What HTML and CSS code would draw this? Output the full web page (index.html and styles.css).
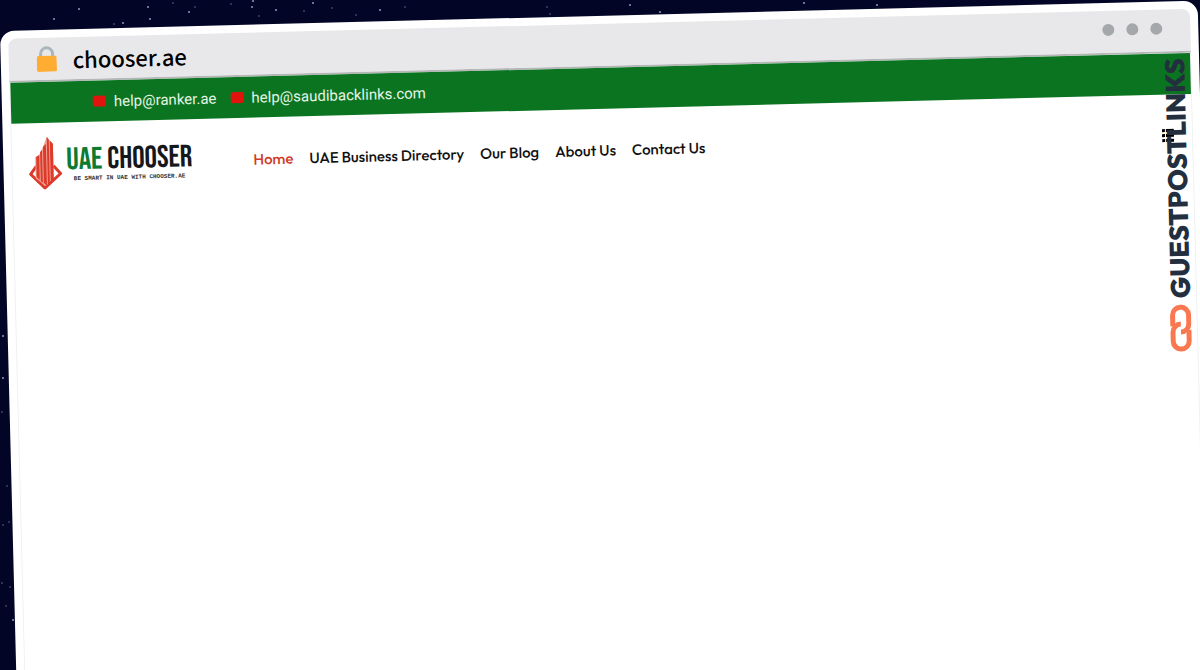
FILE: index.html
```
<!DOCTYPE html>
<html lang="en">
<head>
    <meta charset="UTF-8">
    <title>UAE Chooser</title>
    <link rel="stylesheet" href="styles.css">
</head>
<body>
<svg class="stars" aria-hidden="true">
    <g fill="#8f99be">
        <circle cx="54" cy="19" r="1"/><circle cx="79" cy="9" r="1"/><circle cx="123" cy="23" r="1"/>
        <circle cx="148" cy="7" r="1"/><circle cx="150" cy="19" r="1"/><circle cx="189" cy="12" r="1"/>
        <circle cx="252" cy="7" r="1"/><circle cx="253" cy="1" r="1"/><circle cx="276" cy="10" r="1"/>
        <circle cx="313" cy="3" r="1"/><circle cx="380" cy="10" r="1"/><circle cx="630" cy="5" r="1"/>
        <circle cx="660" cy="12" r="1"/><circle cx="804" cy="3" r="1"/><circle cx="877" cy="5" r="1"/>
        <circle cx="3" cy="336" r="1"/><circle cx="3" cy="378" r="1"/><circle cx="13" cy="620" r="1"/>
    </g>
    <g fill="#3b4368">
        <circle cx="114" cy="24" r="1"/><circle cx="173" cy="3" r="1"/><circle cx="195" cy="7" r="1"/>
        <circle cx="231" cy="4" r="1"/><circle cx="259" cy="16" r="1"/><circle cx="304" cy="11" r="1"/>
        <circle cx="332" cy="8" r="1"/><circle cx="356" cy="15" r="1"/><circle cx="405" cy="7" r="1"/>
        <circle cx="547" cy="7" r="1"/><circle cx="550" cy="14" r="1"/><circle cx="2" cy="412" r="1"/>
        <circle cx="7" cy="486" r="1"/><circle cx="3" cy="525" r="1"/><circle cx="9" cy="522" r="1"/>
        <circle cx="2" cy="583" r="1"/><circle cx="10" cy="587" r="1"/><circle cx="6" cy="606" r="1"/>
    </g>
</svg>
<div class="browser">
    <div class="bar">
        <svg class="lock" viewBox="0 0 20 26" aria-hidden="true">
            <path d="M4 12V8a6 6 0 0 1 12 0v4" fill="none" stroke="#a9b6bd" stroke-width="3"/>
            <rect y="10" width="20" height="16" rx="2" fill="#ffac33"/>
        </svg>
        <span class="address">chooser.ae</span>
        <div class="dots"><i></i><i></i><i></i></div>
    </div>
    <div class="page">
        <div class="topbar">
            <a href="mailto:help@ranker.ae"><i></i>help@ranker.ae</a>
            <a href="mailto:help@saudibacklinks.com"><i></i>help@saudibacklinks.com</a>
        </div>
        <div class="header">
            <a class="logo" href="#">
                <svg class="mark" viewBox="0 0 34 54" aria-hidden="true">
                    <path d="M8 29L2 37l14 14 16-14-7-8" fill="none" stroke="#dc3a2a" stroke-width="3" stroke-linejoin="round"/>
                    <path d="M7 20l4-2 4-8 4-10 6 7v34l-8 8-10-8z" fill="#f2a294"/>
                    <path d="M8 20l3-2v25l-3-3zM12 15l2-2v33l-2-2zM15 10l3-3v42l-3-3zM19 0l2 3v45l-2 1zM22 4l3 3v37l-3 3z" fill="#dc3a2a"/>
                </svg>
                <span class="wordmark">
                    <span class="name"><span>UAE</span> CHOOSER</span>
                    <span class="slogan">BE SMART IN UAE WITH CHOOSER.AE</span>
                </span>
            </a>
            <ul class="nav">
                <li><a class="active" href="#">Home</a></li>
                <li><a href="#">UAE Business Directory</a></li>
                <li><a href="#">Our Blog</a></li>
                <li><a href="#">About Us</a></li>
                <li><a href="#">Contact Us</a></li>
            </ul>
            <button class="toggle" type="button" aria-label="Menu">
                <svg viewBox="0 0 12 14" aria-hidden="true">
                    <path d="M0 2h3M4 2h8M0 7h3M4 7h8M0 12h3M4 12h8" stroke="#000" stroke-width="3"/>
                </svg>
            </button>
        </div>
        <div class="brand">
            <svg viewBox="0 0 22 48" aria-hidden="true">
                <g fill="none" stroke="#fa7850" stroke-width="5">
                    <path d="M3 22V11a8 8 0 0 1 16 0v9a8 8 0 0 1-8 8"/>
                    <path d="M19 26v11a8 8 0 0 1-16 0v-9a8 8 0 0 1 8-8"/>
                </g>
            </svg>
            <span>GUESTPOSTLINKS</span>
        </div>
    </div>
</div>
</body>
</html>
```
FILE: styles.css
```
* {
    margin: 0;
    padding: 0;
    box-sizing: border-box;
}

body {
    height: 100vh;
    overflow: hidden;
    background-color: #020525;
    font-family: Outfit, Lato, sans-serif;
}

a {
    color: inherit;
    text-decoration: none;
}

.stars {
    position: absolute;
    top: 0;
    left: 0;
    width: 100%;
    height: 100%;
}

.browser {
    position: relative;
    margin: 31px 2px 0 0;
    padding: 8px;
    border-radius: 14px;
    background-color: #fff;
    transform: rotate(-1.45deg);
    transform-origin: 0 0;
}

.bar {
    display: flex;
    align-items: center;
    height: 44px;
    padding: 0 28px;
    border-bottom: 2px solid #b4b6b8;
    border-radius: 8px 8px 0 0;
    background-color: #e8e8ea;
}

.lock {
    width: 20px;
    height: 26px;
}

.address {
    margin-left: 16px;
    font-family: "Noto Sans CJK JP", sans-serif;
    font-size: 22px;
    font-weight: 500;
    line-height: 40px;
}

.dots {
    display: flex;
    gap: 12px;
    margin-left: auto;
    padding-bottom: 4px;
}

.dots i {
    width: 12px;
    height: 12px;
    border-radius: 50%;
    background-color: #a5a8aa;
}

.page {
    position: relative;
    min-height: 100vh;
    border: 1px solid #eff1f2;
    border-top: 0;
}

.topbar {
    display: flex;
    align-items: center;
    gap: 14px;
    height: 41px;
    padding-left: 82px;
    background-color: #0b7420;
    color: #e4f5e6;
    font-family: Roboto, sans-serif;
    font-size: 15px;
}

.topbar a {
    display: flex;
    align-items: center;
    gap: 8px;
}

.topbar i {
    width: 13px;
    height: 11px;
    border-radius: 2px;
    background-color: #e0140c;
}

.header {
    display: flex;
    align-items: center;
    height: 82px;
    padding: 0 18px 0 16px;
}

.logo {
    display: flex;
    align-items: center;
    gap: 4px;
}

.mark {
    width: 34px;
    height: 54px;
}

.wordmark {
    display: flex;
    flex-direction: column;
    width: 132px;
    padding-top: 4px;
    white-space: nowrap;
}

.name {
    color: #15171a;
    font-family: "Bebas Neue", "Roboto Condensed", "Liberation Sans Narrow", sans-serif;
    font-size: 31px;
    line-height: 28px;
}

.name span {
    color: #0c7b32;
}

.slogan {
    padding-left: 7px;
    color: #333;
    font-family: "Liberation Mono", monospace;
    font-size: 6px;
    font-weight: 700;
    line-height: 10px;
}

.nav {
    display: flex;
    gap: 16px;
    margin-left: 55px;
    list-style: none;
    font-size: 15px;
    font-weight: 500;
    color: #111;
}

.nav .active {
    color: #cf3b28;
}

.toggle {
    width: 12px;
    height: 14px;
    margin-left: auto;
    border: 0;
    background: none;
}

.toggle svg {
    display: block;
}

/* vertical brand label over the right edge of the page */
.brand {
    position: absolute;
    top: 5px;
    right: 3px;
    display: flex;
    align-items: center;
    gap: 6px;
    writing-mode: vertical-rl;
    transform: rotate(180deg);
    color: #232f3e;
    font-size: 27px;
    font-weight: 800;
    line-height: 26px;
}

.brand svg {
    width: 22px;
    height: 48px;
}
```
